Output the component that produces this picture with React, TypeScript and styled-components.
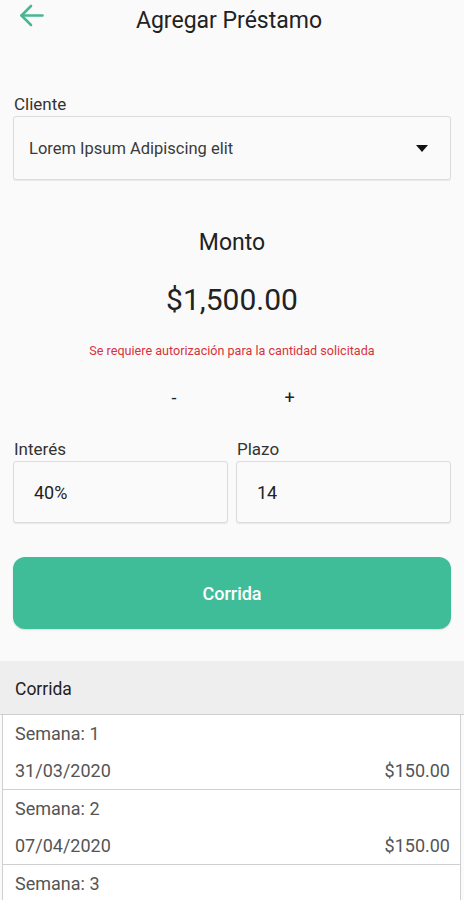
import React from "react";
import styled, { createGlobalStyle } from "styled-components";

const Global = createGlobalStyle`
  html, body { margin: 0; padding: 0; background: #fafafa; }
  body { font-family: Roboto, "Noto Sans", Arial, sans-serif; }
  * { box-sizing: border-box; }
`;

const Page = styled.div`
  width: 464px;
  height: 900px;
  overflow: hidden;
  background: #fafafa;
  display: flex;
  flex-direction: column;
`;

const Header = styled.div`
  display: grid;
  grid-template-columns: 60px 1fr 66px;
  align-items: start;
  height: 42px;
`;

const BackButton = styled.div`
  display: flex;
  align-items: center;
  padding-left: 19px;
  padding-top: 4px;
`;

const Title = styled.h1`
  margin: 0;
  text-align: center;
  font-size: 23px;
  line-height: 42px;
  font-weight: 400;
  color: #222;
`;

const Form = styled.div`
  padding: 0 13px;
  display: flex;
  flex-direction: column;
`;

const Label = styled.div`
  font-size: 17px;
  color: #333;
  line-height: 20px;
  margin-bottom: 2px;
  padding-left: 1px;
`;

const Field = styled.div<{ $height: number; $padLeft: number }>`
  height: ${(p) => p.$height}px;
  border: 1px solid #dcdcdc;
  border-radius: 3px;
  background: #fafafa;
  box-shadow: 0 1px 1px rgba(0, 0, 0, 0.07);
  display: flex;
  align-items: center;
  justify-content: space-between;
  padding: 0 22px 0 ${(p) => p.$padLeft}px;
  color: #333;
`;

const SelectText = styled.span`
  font-size: 16.5px;
  color: #3a3a3a;
`;

const ValueText = styled.span`
  font-size: 18px;
  color: #222;
`;

const ClientBlock = styled.div`
  margin-top: 52px;
`;

const AmountBlock = styled.div`
  display: flex;
  flex-direction: column;
  align-items: center;
`;

const AmountLabel = styled.div`
  font-size: 23px;
  color: #222;
  line-height: 28px;
  margin-top: 49px;
`;

const Amount = styled.div`
  font-size: 30px;
  color: #222;
  line-height: 36px;
  margin-top: 25px;
`;

const Warning = styled.div`
  font-size: 12.6px;
  color: #d8323c;
  margin-top: 25px;
  line-height: 16px;
`;

const Stepper = styled.div`
  display: grid;
  grid-template-columns: 113px 12px;
  margin-top: 29px;
  padding-left: 4px;
  font-size: 18px;
  color: #222;
  line-height: 20px;
`;

const TwoCols = styled.div`
  display: grid;
  grid-template-columns: 1fr 1fr;
  gap: 8px;
  margin-top: 31px;
`;

const PrimaryButton = styled.button`
  margin-top: 34px;
  height: 72px;
  border: none;
  border-radius: 12px;
  background: #3fbd99;
  color: #fff;
  font-family: inherit;
  font-size: 18px;
  font-weight: 500;
  box-shadow: 0 1px 2px rgba(0, 0, 0, 0.12);
`;

const SectionHeader = styled.div`
  margin-top: 32px;
  height: 54px;
  background: #eeeeee;
  border-bottom: 1px solid #cfcfcf;
  display: flex;
  align-items: center;
  padding: 2px 0 0 15px;
  font-size: 17.5px;
  color: #222;
  flex-shrink: 0;
`;

const List = styled.div`
  display: flex;
  flex-direction: column;
  margin: 0 3px 0 2px;
`;

const Row = styled.div`
  height: 75px;
  background: #fff;
  border-left: 1px solid #cfcfcf;
  border-right: 1px solid #cfcfcf;
  border-bottom: 1px solid #cfcfcf;
  display: flex;
  flex-direction: column;
  padding: 8px 10px 0 12px;
  font-size: 18px;
  color: #555;
  flex-shrink: 0;
`;

const RowLine = styled.div<{ $gap?: number }>`
  display: flex;
  justify-content: space-between;
  line-height: 22px;
  margin-top: ${(p) => p.$gap ?? 0}px;
`;

const rows: { w: number; date?: string; amt?: string }[] = [
  { w: 1, date: "31/03/2020", amt: "$150.00" },
  { w: 2, date: "07/04/2020", amt: "$150.00" },
  { w: 3 },
];

export default function App() {
  return (
    <Page>
      <Global />
      <Header>
        <BackButton>
          <svg width="25" height="23" viewBox="0 0 25 23" fill="none" stroke="#45b892" strokeWidth="2.6" strokeLinecap="round" strokeLinejoin="round">
            <path d="M23.5 11.5H2.5" />
            <path d="M12 2L2.5 11.5 12 21" />
          </svg>
        </BackButton>
        <Title>Agregar Préstamo</Title>
        <div />
      </Header>
      <Form>
        <ClientBlock>
          <Label>Cliente</Label>
          <Field $height={64} $padLeft={15}>
            <SelectText>Lorem Ipsum Adipiscing elit</SelectText>
            <svg width="12" height="7" viewBox="0 0 12 7">
              <path d="M0 0h12L6 7z" fill="#111" />
            </svg>
          </Field>
        </ClientBlock>
        <AmountBlock>
          <AmountLabel>Monto</AmountLabel>
          <Amount>$1,500.00</Amount>
          <Warning>Se requiere autorización para la cantidad solicitada</Warning>
          <Stepper>
            <span>-</span>
            <span>+</span>
          </Stepper>
        </AmountBlock>
        <TwoCols>
          <div>
            <Label>Interés</Label>
            <Field $height={62} $padLeft={20}>
              <ValueText>40%</ValueText>
            </Field>
          </div>
          <div>
            <Label>Plazo</Label>
            <Field $height={62} $padLeft={20}>
              <ValueText>14</ValueText>
            </Field>
          </div>
        </TwoCols>
        <PrimaryButton>Corrida</PrimaryButton>
      </Form>
      <SectionHeader>Corrida</SectionHeader>
      <List>
        {rows.map((r) => (
          <Row key={r.w}>
            <RowLine>
              <span>Semana: {r.w}</span>
            </RowLine>
            {r.date && (
              <RowLine $gap={15}>
                <span>{r.date}</span>
                <span>{r.amt}</span>
              </RowLine>
            )}
          </Row>
        ))}
      </List>
    </Page>
  );
}
